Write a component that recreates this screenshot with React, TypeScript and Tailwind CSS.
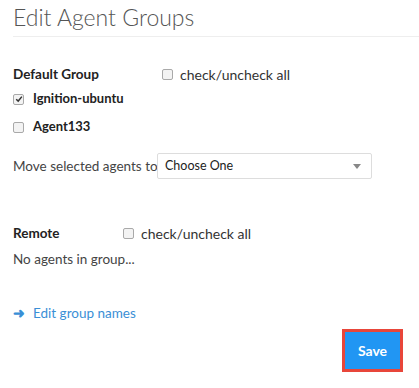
function Box({ checked }: { checked?: boolean }) {
  return (
    <span className="inline-flex items-center justify-center w-[11px] h-[11px] rounded-[2px] border border-[#a9a9a9] bg-[#f3f3f3] shrink-0">
      {checked && (
        <svg viewBox="0 0 10 10" className="w-[8px] h-[8px]">
          <path d="M1.5 5.2 L4 7.6 L8.6 2" fill="none" stroke="#333" strokeWidth="1.8" />
        </svg>
      )}
    </span>
  );
}

export default function App() {
  return (
    <div className="w-[419px] h-[388px] bg-white text-[#333] font-['Lato',sans-serif] text-[14px] overflow-hidden">
      <div className="pl-[13px]">
        <h1 className="text-[23px] font-light text-[#555] leading-none pt-[6px] pb-[7px] border-b border-[#eee]">
          Edit Agent Groups
        </h1>
      </div>

      <div className="px-[13px]">
        <div className="flex items-center mt-[27px] h-[20px]">
          <span className="w-[149px] font-bold text-[13.5px] text-[#222]">Default Group</span>
          <Box />
          <span className="ml-[7px]">check/uncheck all</span>
        </div>
        <div className="flex items-center mt-[5px] h-[20px] font-bold text-[13px] text-[#222]">
          <Box checked />
          <span className="ml-[9px]">Ignition-ubuntu</span>
        </div>
        <div className="flex items-center mt-[8px] h-[20px] font-bold text-[13px] text-[#222]">
          <Box />
          <span className="ml-[9px]">Agent133</span>
        </div>

        <div className="flex items-center mt-[16px]">
          <span className="w-[144px] shrink-0 whitespace-nowrap text-[13.5px] text-[#444]">Move selected agents to</span>
          <div className="flex items-center justify-between w-[215px] h-[26px] border border-[#ddd] rounded-[2px] pl-[7px] pr-[10px] text-[12.5px] text-[#222]">
            <span>Choose One</span>
            <svg viewBox="0 0 8 5" className="w-[8px] h-[5px]">
              <path d="M0 0 H8 L4 5 Z" fill="#888" />
            </svg>
          </div>
        </div>

        <div className="flex items-center mt-[44px] h-[20px]">
          <span className="w-[110px] font-bold text-[13.5px] text-[#222]">Remote</span>
          <Box />
          <span className="ml-[7px]">check/uncheck all</span>
        </div>
        <div className="mt-[6px] h-[20px] flex items-center text-[13.5px] text-[#444]">No agents in group...</div>

        <div className="flex items-center mt-[34px] h-[20px] text-[#3a8fd6] text-[13.5px]">
          <span className="font-bold w-[20px]">➜</span>
          <span>Edit group names</span>
        </div>

        <div className="flex justify-end pr-[3px] mt-[6px]">
          <div className="border-[3px] border-[#e8463a]">
            <button className="w-[55px] h-[37px] bg-[#2196f3] text-white font-bold text-[14px]">Save</button>
          </div>
        </div>
      </div>
    </div>
  );
}
